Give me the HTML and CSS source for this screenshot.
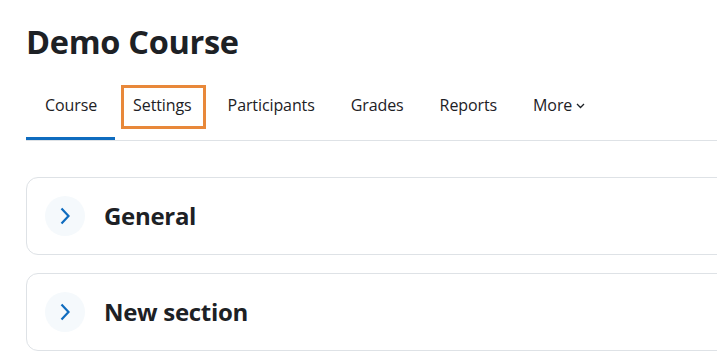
FILE: index.html
```html
<!DOCTYPE html>
<html lang="en">
<head>
    <meta charset="UTF-8">
    <title>Course: Demo Course</title>
    <link rel="stylesheet" href="styles.css">
</head>
<body>
    <div class="page">
        <h1 class="course-title">Demo Course</h1>

        <nav class="course-nav">
            <a href="#" class="tab active">Course</a>
            <a href="#" class="tab focused">Settings</a>
            <a href="#" class="tab">Participants</a>
            <a href="#" class="tab">Grades</a>
            <a href="#" class="tab">Reports</a>
            <a href="#" class="tab">More
                <svg class="caret" width="9" height="6" viewBox="0 0 9 6"><polyline points="1,1 4.5,4.5 8,1" fill="none" stroke="#1d2125" stroke-width="1.3"/></svg>
            </a>
        </nav>

        <div class="sections">
            <div class="section">
                <span class="toggle">
                    <svg width="12" height="18" viewBox="0 0 12 18"><polyline points="2.5,1.5 9.5,9 2.5,16.5" fill="none" stroke="#0f6cbf" stroke-width="2.2"/></svg>
                </span>
                <h3 class="section-name">General</h3>
            </div>
            <div class="section">
                <span class="toggle">
                    <svg width="12" height="18" viewBox="0 0 12 18"><polyline points="2.5,1.5 9.5,9 2.5,16.5" fill="none" stroke="#0f6cbf" stroke-width="2.2"/></svg>
                </span>
                <h3 class="section-name">New section</h3>
            </div>
        </div>
    </div>
</body>
</html>
```

FILE: styles.css
```css
body {
    margin: 0;
    font-family: "Open Sans", "Liberation Sans", sans-serif;
    color: #1d2125;
    background: #fff;
}
.page {
    padding-left: 26px;
    overflow: hidden;
}
.course-title {
    font-size: 32.5px;
    font-weight: 700;
    line-height: 40px;
    margin: 22px 0 0 0;
    letter-spacing: -0.3px;
}
.course-nav {
    display: flex;
    align-items: center;
    margin-top: 13px;
    border-bottom: 1px solid #dee2e6;
}
.tab {
    position: relative;
    display: flex;
    align-items: center;
    gap: 4px;
    padding: 18px 18px 23px 18px;
    font-size: 16px;
    line-height: 24px;
    color: #1d2125;
    text-decoration: none;
    letter-spacing: -0.1px;
}
.tab.active {
    padding-left: 19px;
    border-bottom: 3px solid #0f6cbf;
    padding-bottom: 20px;
}
.tab.focused::after {
    content: "";
    position: absolute;
    left: 6px;
    right: 4px;
    top: 10px;
    bottom: 11px;
    border: 3px solid #e8883a;
}
.caret {
    margin-top: 2px;
}
.sections {
    margin-top: 36px;
    margin-right: -40px;
    display: flex;
    flex-direction: column;
    gap: 18px;
}
.section {
    display: flex;
    align-items: center;
    gap: 19px;
    padding: 18px;
    border: 1px solid #dee2e6;
    border-radius: 12px;
}
.toggle {
    width: 40px;
    height: 40px;
    border-radius: 50%;
    background: #f5f9fc;
    display: flex;
    align-items: center;
    justify-content: center;
}
.section-name {
    margin: 0;
    font-size: 24px;
    font-weight: 700;
    line-height: 32px;
    letter-spacing: -0.3px;
}
```
